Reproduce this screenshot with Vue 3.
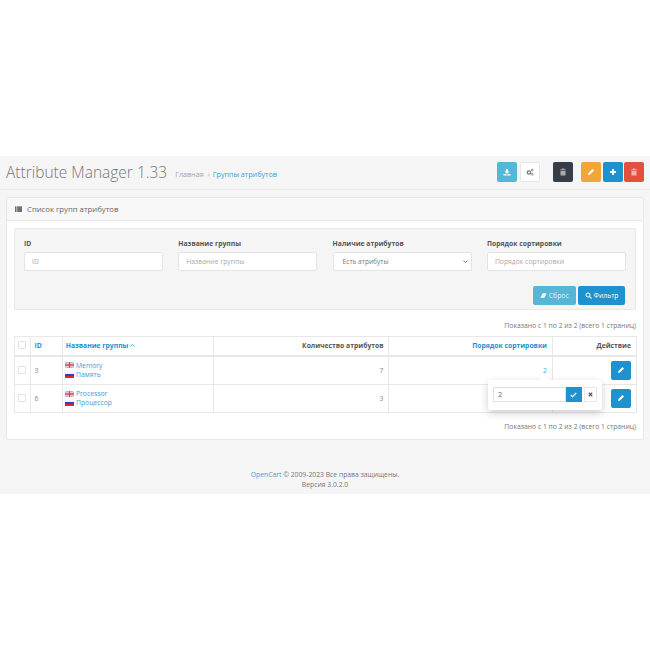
<script setup>
const groups = [
  { id: 3, en: 'Memory', ru: 'Память', count: 7, sort: 2 },
  { id: 6, en: 'Processor', ru: 'Процессор', count: 3, sort: '' },
]
const fields = [
  { label: 'ID', placeholder: 'ID' },
  { label: 'Название группы', placeholder: 'Название группы' },
  { label: 'Наличие атрибутов', select: 'Есть атрибуты' },
  { label: 'Порядок сортировки', placeholder: 'Порядок сортировки' },
]
const pager = 'Показано с 1 по 2 из 2 (всего 1 страниц)'
</script>

<template>
  <div class="page">
    <header class="head">
      <h1>Attribute Manager 1.33</h1>
      <nav class="crumbs"><span>Главная</span><i>›</i><a>Группы атрибутов</a></nav>
      <div class="tools">
        <button class="b info">
          <svg viewBox="0 0 16 16"><path d="M6 2h4v5h3l-5 5-5-5h3zM1 12h4l3 2 3-2h4v3H1z" /></svg>
        </button>
        <button class="b plain">
          <svg viewBox="0 0 16 16"><circle cx="6" cy="9" r="3.4" fill="none" stroke="currentColor" stroke-width="2.4" /><circle cx="12.5" cy="4" r="1.9" fill="none" stroke="currentColor" stroke-width="1.5" /><circle cx="12.5" cy="12.5" r="1.9" fill="none" stroke="currentColor" stroke-width="1.5" /></svg>
        </button>
        <button class="b dark">
          <svg viewBox="0 0 16 16"><path d="M6 1h4l1 2h3v1.500H2V3h3zM3 6h10v9H3z" /></svg>
        </button>
        <button class="b warn">
          <svg viewBox="0 0 16 16"><path d="M11 2l3 3-8 8-4 1 1-4z" /></svg>
        </button>
        <button class="b primary">
          <svg viewBox="0 0 16 16"><path d="M6 2h4v4h4v4h-4v4H6v-4H2V6h4z" /></svg>
        </button>
        <button class="b danger">
          <svg viewBox="0 0 16 16"><path d="M6 1h4l1 2h3v1.500H2V3h3zM3 6h10v9H3z" /></svg>
        </button>
      </div>
    </header>

    <section class="panel">
      <div class="panel-head">
        <svg class="list-ic" viewBox="0 0 16 12"><path d="M0 0h3.500v3H0zM5 0h11v3H5zM0 4.500h3.500v3H0zM5 4.500h11v3H5zM0 9h3.500v3H0zM5 9h11v3H5z" /></svg>
        Список групп атрибутов
      </div>
      <div class="panel-body">
        <div class="filter">
          <div class="filter-grid">
            <div v-for="f in fields" :key="f.label" class="field">
              <label>{{ f.label }}</label>
              <div v-if="f.select" class="input select">
                {{ f.select }}
                <svg viewBox="0 0 10 6"><path d="M1 1l4 4 4-4" fill="none" stroke="#555" stroke-width="1.600" /></svg>
              </div>
              <div v-else class="input ph">{{ f.placeholder }}</div>
            </div>
          </div>
          <div class="filter-actions">
            <button class="fbtn reset">
              <svg viewBox="0 0 16 12"><path d="M6 1h9L10 11H1z" /></svg>Сброс
            </button>
            <button class="fbtn go">
              <svg viewBox="0 0 14 14"><circle cx="6" cy="6" r="4" fill="none" stroke="currentColor" stroke-width="2" /><path d="M9 9l4 4" stroke="currentColor" stroke-width="2.200" /></svg>Фильтр
            </button>
          </div>
        </div>

        <div class="pager first">{{ pager }}</div>

        <div class="table-wrap">
          <table>
            <colgroup>
              <col class="c1" /><col class="c2" /><col class="c3" /><col class="c4" /><col class="c5" /><col class="c6" />
            </colgroup>
            <thead>
              <tr>
                <th><span class="check"></span></th>
                <th class="link idc">ID</th>
                <th class="link namec">Название группы <svg class="caret" viewBox="0 0 10 6"><path d="M1 5l4-4 4 4" fill="none" stroke="currentColor" stroke-width="1.500" /></svg></th>
                <th class="r">Количество атрибутов</th>
                <th class="r link">Порядок сортировки</th>
                <th class="r">Действие</th>
              </tr>
            </thead>
            <tbody>
              <tr v-for="g in groups" :key="g.id">
                <td><span class="check"></span></td>
                <td class="idc">{{ g.id }}</td>
                <td class="names">
                  <div class="name">
                    <svg class="flag" viewBox="0 0 9 6"><rect width="9" height="6" fill="#b3aecb" /><path d="M0 0l9 6M9 0L0 6" stroke="#e8d5de" stroke-width="1" /><path d="M3.200 0h2.600v6H3.200zM0 1.700h9v2.600H0z" fill="#efe4ea" /><path d="M3.800 0h1.400v6H3.800zM0 2.300h9v1.400H0z" fill="#de3f50" /></svg>
                    <a>{{ g.en }}</a>
                  </div>
                  <div class="name">
                    <svg class="flag" viewBox="0 0 9 6"><rect width="9" height="2" fill="#f4f4f8" /><rect y="2" width="9" height="2" fill="#2a3fd0" /><rect y="4" width="9" height="2" fill="#e02430" /></svg>
                    <a>{{ g.ru }}</a>
                  </div>
                </td>
                <td class="r">{{ g.count }}</td>
                <td class="r"><a class="sort">{{ g.sort }}</a></td>
                <td class="r">
                  <button class="edit"><svg viewBox="0 0 16 16"><path d="M11 2l3 3-8 8-4 1 1-4z" /></svg></button>
                </td>
              </tr>
            </tbody>
          </table>

          <div class="popover">
            <span class="arrow"></span>
            <div class="pop-input">2</div>
            <button class="pop-ok"><svg viewBox="0 0 14 12"><path d="M1.500 6l3.500 3.500L12.500 2" fill="none" stroke="#fff" stroke-width="2.400" /></svg></button>
            <button class="pop-x"><svg viewBox="0 0 10 10"><path d="M1.500 1.500l7 7M8.500 1.500l-7 7" stroke="#555" stroke-width="2.200" /></svg></button>
          </div>
        </div>

        <div class="pager last">{{ pager }}</div>
      </div>
    </section>

    <footer class="foot">
      <div><a>OpenCart</a> © 2009-2023 Все права защищены.</div>
      <div>Версия 3.0.2.0</div>
    </footer>
  </div>
</template>

<style>
html, body { margin: 0; background: #fff; }
</style>

<style scoped>
.page {
  width: 650px;
  margin-top: 156px;
  height: 338px;
  background: #f5f5f5;
  font-family: "Open Sans", sans-serif;
  font-size: 6.800px;
  color: #666;
  overflow: hidden;
  box-sizing: border-box;
}
a { color: #1e91cf; }
button { border: 0; padding: 0; font-family: inherit; }

.head {
  height: 34px;
  box-sizing: border-box;
  border-bottom: 1px solid #ececec;
  display: flex;
  align-items: center;
  padding: 0 6px 2px;
}
h1 {
  margin: 0;
  font-size: 15.500px;
  font-weight: 300;
  color: #757575;
  line-height: 28px;
  white-space: nowrap;
}
.crumbs {
  display: flex;
  align-items: center;
  margin: 4px 0 0 8px;
  color: #a5a5a5;
  font-size: 7.200px;
}
.crumbs i { font-style: normal; margin: 0 3px 0 4px; }
.crumbs a { color: #3ba0d8; }
.tools { margin-left: auto; display: flex; }
.b {
  width: 20.500px;
  height: 20px;
  border-radius: 2px;
  display: flex;
  align-items: center;
  justify-content: center;
  box-sizing: border-box;
}
.b svg { width: 8px; height: 8px; fill: currentColor; }
.info { background: #56b6d5; color: #fff; }
.plain { margin-left: 2.500px; background: #fff; border: 1px solid #e8e8e8; color: #777; }
.dark { margin-left: 12.500px; background: #363e47; color: #a8adb2; }
.warn { margin-left: 7.500px; background: #f3a638; color: #fff; }
.primary { margin-left: 1.500px; background: #1e91cf; color: #fff; }
.danger { margin-left: 0.500px; background: #e3503e; color: #f4b3aa; }

.panel {
  margin: 7px 6px 0;
  height: 243px;
  box-sizing: border-box;
  background: #fff;
  border: 1px solid #e8e8e8;
  border-radius: 2px;
}
.panel-head {
  height: 23px;
  box-sizing: border-box;
  background: #f8f8f8;
  border-bottom: 1px solid #e8e8e8;
  display: flex;
  align-items: center;
  gap: 5px;
  padding: 0 0 1px 8px;
  color: #666;
  font-size: 7.750px;
}
.list-ic { width: 7px; height: 6px; fill: #444; }
.panel-body { padding: 7px 7px 0; }

.filter {
  height: 82px;
  box-sizing: border-box;
  background: #f5f5f5;
  border: 1px solid #e8e8e8;
  border-radius: 2px;
  padding: 10px 9px 0;
}
.filter-grid {
  display: grid;
  grid-template-columns: repeat(4, 139px);
  column-gap: 15.300px;
}
.field label {
  display: block;
  font-weight: 700;
  color: #555;
  line-height: 10px;
  margin-bottom: 3px;
}
.input {
  height: 19px;
  box-sizing: border-box;
  background: #fff;
  border: 1px solid #e4e4e4;
  border-radius: 2px;
  display: flex;
  align-items: center;
  padding-left: 7px;
}
.ph { color: #aaa; }
.select { justify-content: space-between; padding: 0 3px 0 9px; color: #777; font-size: 6.600px; }
.select svg { width: 5px; height: 3px; }
.filter-actions {
  display: flex;
  justify-content: flex-end;
  gap: 2.500px;
  margin-top: 15px;
  padding-right: 1px;
}
.fbtn {
  height: 19px;
  border-radius: 2px;
  color: #fff;
  display: flex;
  align-items: center;
  justify-content: center;
  gap: 2px;
  font-size: 6.800px;
}
.fbtn svg { width: 7px; height: 7px; fill: #fff; }
.go svg { fill: none; }
.reset { width: 42.500px; background: #56b6d5; color: #e4f4f9; }
.go { width: 47px; background: #1e91cf; }

.pager { text-align: right; color: #777; line-height: 10px; }
.pager.first { margin-top: 11px; }
.pager.last { margin-top: 9px; }

.table-wrap { position: relative; margin-top: 5px; }
table {
  width: 622px;
  table-layout: fixed;
  border-collapse: collapse;
}
.c1 { width: 15.500px; }
.c2 { width: 32px; }
.c3 { width: 151px; }
.c4 { width: 175.500px; }
.c5 { width: 163.500px; }
.c6 { width: 84.500px; }
th, td {
  border: 1px solid #e8e8e8;
  padding: 0 4.500px;
  text-align: left;
  box-sizing: border-box;
  white-space: nowrap;
}
th {
  height: 19px;
  font-weight: 700;
  color: #555;
  border-bottom-width: 2px;
}
td { height: 28.500px; color: #888; }
th.link { color: #1e91cf; }
.r, th.r { text-align: right; }
th.link.r { color: #1e91cf; }
th:first-child, td:first-child { padding: 0 3px; }
th.idc, td.idc { padding-left: 4px; }
th.namec { padding-left: 3.200px; }
.check {
  display: block;
  box-sizing: border-box;
  width: 8px;
  height: 8px;
  margin: 0 auto 1px;
  border: 1px solid #e2e2e2;
  border-radius: 1px;
  background: #fff;
}
.caret { width: 5px; height: 3px; vertical-align: 1px; }
.names { padding-left: 2.500px; }
.name { display: flex; align-items: center; gap: 2px; line-height: 9.500px; }
.flag { width: 9px; height: 6px; flex: none; }
.name a { color: #3ba0d8; }
.sort { color: #4aa8dc; }
th:last-child, td:last-child { padding-right: 5px; }
.edit {
  width: 20px;
  height: 19px;
  background: #1e91cf;
  border-radius: 2px;
  display: inline-flex;
  align-items: center;
  justify-content: center;
  vertical-align: middle;
}
.edit svg { width: 8px; height: 8px; fill: #fff; }

.popover {
  position: absolute;
  left: 474px;
  top: 43.500px;
  width: 114px;
  height: 30px;
  box-sizing: border-box;
  background: #fff;
  border-radius: 2px;
  box-shadow: 0 3px 8px rgba(0, 0, 0, 0.2);
  display: flex;
  align-items: center;
  padding: 0 5px;
}
.arrow {
  position: absolute;
  top: -3.500px;
  left: 53px;
  width: 7px;
  height: 7px;
  background: #fff;
  transform: rotate(45deg);
}
.pop-input {
  position: relative;
  width: 72.500px;
  height: 15px;
  box-sizing: border-box;
  border: 1px solid #e2e2e2;
  line-height: 13px;
  padding-left: 4px;
  font-size: 7.500px;
  color: #666;
}
.pop-ok {
  position: relative;
  width: 16.500px;
  height: 15px;
  background: #1e91cf;
  display: flex;
  align-items: center;
  justify-content: center;
}
.pop-ok svg { width: 7px; height: 6px; }
.pop-x {
  position: relative;
  width: 13px;
  height: 15px;
  margin-left: 2px;
  background: #fff;
  border: 1px solid #e8e8e8;
  box-sizing: border-box;
  display: flex;
  align-items: center;
  justify-content: center;
}
.pop-x svg { width: 5px; height: 5px; }

.foot {
  margin-top: 30px;
  text-align: center;
  color: #777;
  line-height: 10px;
}
.foot a { color: #3ba0d8; }
</style>
